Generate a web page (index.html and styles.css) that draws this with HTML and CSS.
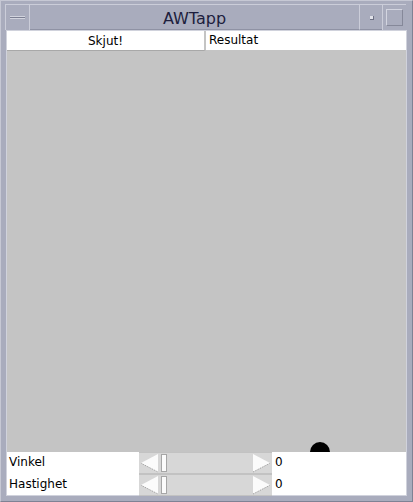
FILE: index.html
```html
<!DOCTYPE html>
<html>
<head>
<meta charset="utf-8">
<link rel="stylesheet" href="styles.css">
</head>
<body>
<div class="window">
  <div class="titlebar">
    <div class="tb-btn menu"><span class="dash"></span></div>
    <div class="title">AWTapp</div>
    <div class="tb-btn mini"><span class="dot"></span></div>
    <div class="tb-btn maxi"><span class="sq"></span></div>
  </div>
  <div class="client">
    <div class="toprow">
      <div class="btn">Skjut!</div>
      <div class="result">Resultat</div>
    </div>
    <div class="canvas"><div class="ball"></div></div>
    <div class="controls">
      <div class="row">
        <div class="label">Vinkel</div>
        <div class="scrollbar">
          <div class="arrow">
            <svg width="22" height="20" viewBox="0 0 22 20"><polygon points="2,10 19,1 19,19" fill="#fbfbfb"/><line x1="2.5" y1="10.5" x2="19" y2="19" stroke="#9a9a9a" stroke-width="1" stroke-dasharray="1,1"/></svg>
          </div>
          <div class="thumb"></div>
          <div class="track"></div>
          <div class="arrow">
            <svg width="22" height="20" viewBox="0 0 22 20"><polygon points="3,1 20,10 3,19" fill="#fbfbfb"/><line x1="3" y1="19" x2="19.5" y2="10.5" stroke="#9a9a9a" stroke-width="1" stroke-dasharray="1,1"/></svg>
          </div>
        </div>
        <div class="value">0</div>
      </div>
      <div class="row">
        <div class="label">Hastighet</div>
        <div class="scrollbar">
          <div class="arrow">
            <svg width="22" height="20" viewBox="0 0 22 20"><polygon points="2,10 19,1 19,19" fill="#fbfbfb"/><line x1="2.5" y1="10.5" x2="19" y2="19" stroke="#9a9a9a" stroke-width="1" stroke-dasharray="1,1"/></svg>
          </div>
          <div class="thumb"></div>
          <div class="track"></div>
          <div class="arrow">
            <svg width="22" height="20" viewBox="0 0 22 20"><polygon points="3,1 20,10 3,19" fill="#fbfbfb"/><line x1="3" y1="19" x2="19.5" y2="10.5" stroke="#9a9a9a" stroke-width="1" stroke-dasharray="1,1"/></svg>
          </div>
        </div>
        <div class="value">0</div>
      </div>
    </div>
  </div>
</div>
</body>
</html>
```

FILE: styles.css
```css
* { box-sizing: border-box; }
html, body { margin: 0; padding: 0; background: #a9acbd; }
body { font-family: "DejaVu Sans", sans-serif; font-size: 12px; color: #000; }

.window {
  width: 413px;
  height: 502px;
  background: #a9acbd;
  border-top: 1px solid #c6c8d4;
  border-left: 1px solid #c6c8d4;
  border-right: 1px solid #7f8294;
  border-bottom: 1px solid #7f8294;
  padding: 0 6px 6px 6px;
  display: flex;
  flex-direction: column;
}

.titlebar {
  display: flex;
  height: 26px;
  margin: 3px 0 1px -2px;
  border-top: 1px solid #cbcdd9;
  border-left: 1px solid #cbcdd9;
}
.tb-btn {
  display: flex;
  align-items: center;
  justify-content: center;
}
.menu { width: 24px; border-right: 1px solid #cbcdd9; }
.dash {
  width: 15px;
  height: 3px;
  background: #7c7f92;
  border-top: 1px solid #d2d4de;
  border-bottom: 1px solid #d2d4de;
}
.title {
  flex: 1;
  text-align: center;
  font-size: 16px;
  line-height: 23px;
  padding-top: 2px;
  color: #1d1e3d;
  border-bottom: 1px solid #8f92a4;
}
.mini { width: 23px; border-left: 1px solid #cbcdd9; border-bottom: 1px solid #8f92a4; }
.dot {
  width: 4px;
  height: 4px;
  background: #e2e3ea;
  border-right: 1px solid #6d7083;
  border-bottom: 1px solid #6d7083;
  margin-left: 1px;
  margin-top: 1px;
}
.maxi { width: 24px; border-left: 1px solid #cbcdd9; }
.sq {
  width: 17px;
  height: 17px;
  border-top: 1px solid #d3d5e0;
  border-left: 1px solid #d3d5e0;
  border-right: 1px solid #858899;
  border-bottom: 1px solid #858899;
}

.client {
  width: 399px;
  display: flex;
  flex-direction: column;
  background: #ffffff;
  box-shadow: 0 0 0 1px #d0d2dc;
}

.toprow {
  display: grid;
  grid-template-columns: 199px 1fr;
  height: 21px;
  background: #c4c4c4;
}
.btn {
  background: #ffffff;
  text-align: center;
  line-height: 18px;
  border-right: 2px solid #c4c4c4;
  border-bottom: 1px solid #a8a8a8;
  margin-bottom: 1px;
  padding-top: 1px;
}
.result {
  background: #ffffff;
  line-height: 19px;
  padding-left: 3px;
  margin-bottom: 2px;
}

.canvas {
  position: relative;
  height: 400px;
  background: #c4c4c4;
  overflow: hidden;
}
.ball {
  position: absolute;
  left: 303px;
  top: 390px;
  width: 20px;
  height: 20px;
  border-radius: 50%;
  background: #000;
}

.controls {
  display: flex;
  flex-direction: column;
  gap: 1px;
  background: #ffffff;
}
.row {
  display: grid;
  grid-template-columns: 132px 133px 1fr;
  height: 21px;
}
.label { line-height: 21px; padding-left: 2px; }
.value { line-height: 21px; padding-left: 3px; }

.scrollbar {
  display: flex;
  background: #d7d7d7;
  border-top: 1px solid #c2c2c2;
  border-bottom: 1px solid #c2c2c2;
}
.arrow { width: 22px; display: flex; align-items: center; }
.arrow svg { display: block; }
.thumb {
  width: 6px;
  margin: 1px 0;
  background: #fbfbfb;
  border: 1px solid #a6a6a6;
}
.track { flex: 1; }
```
